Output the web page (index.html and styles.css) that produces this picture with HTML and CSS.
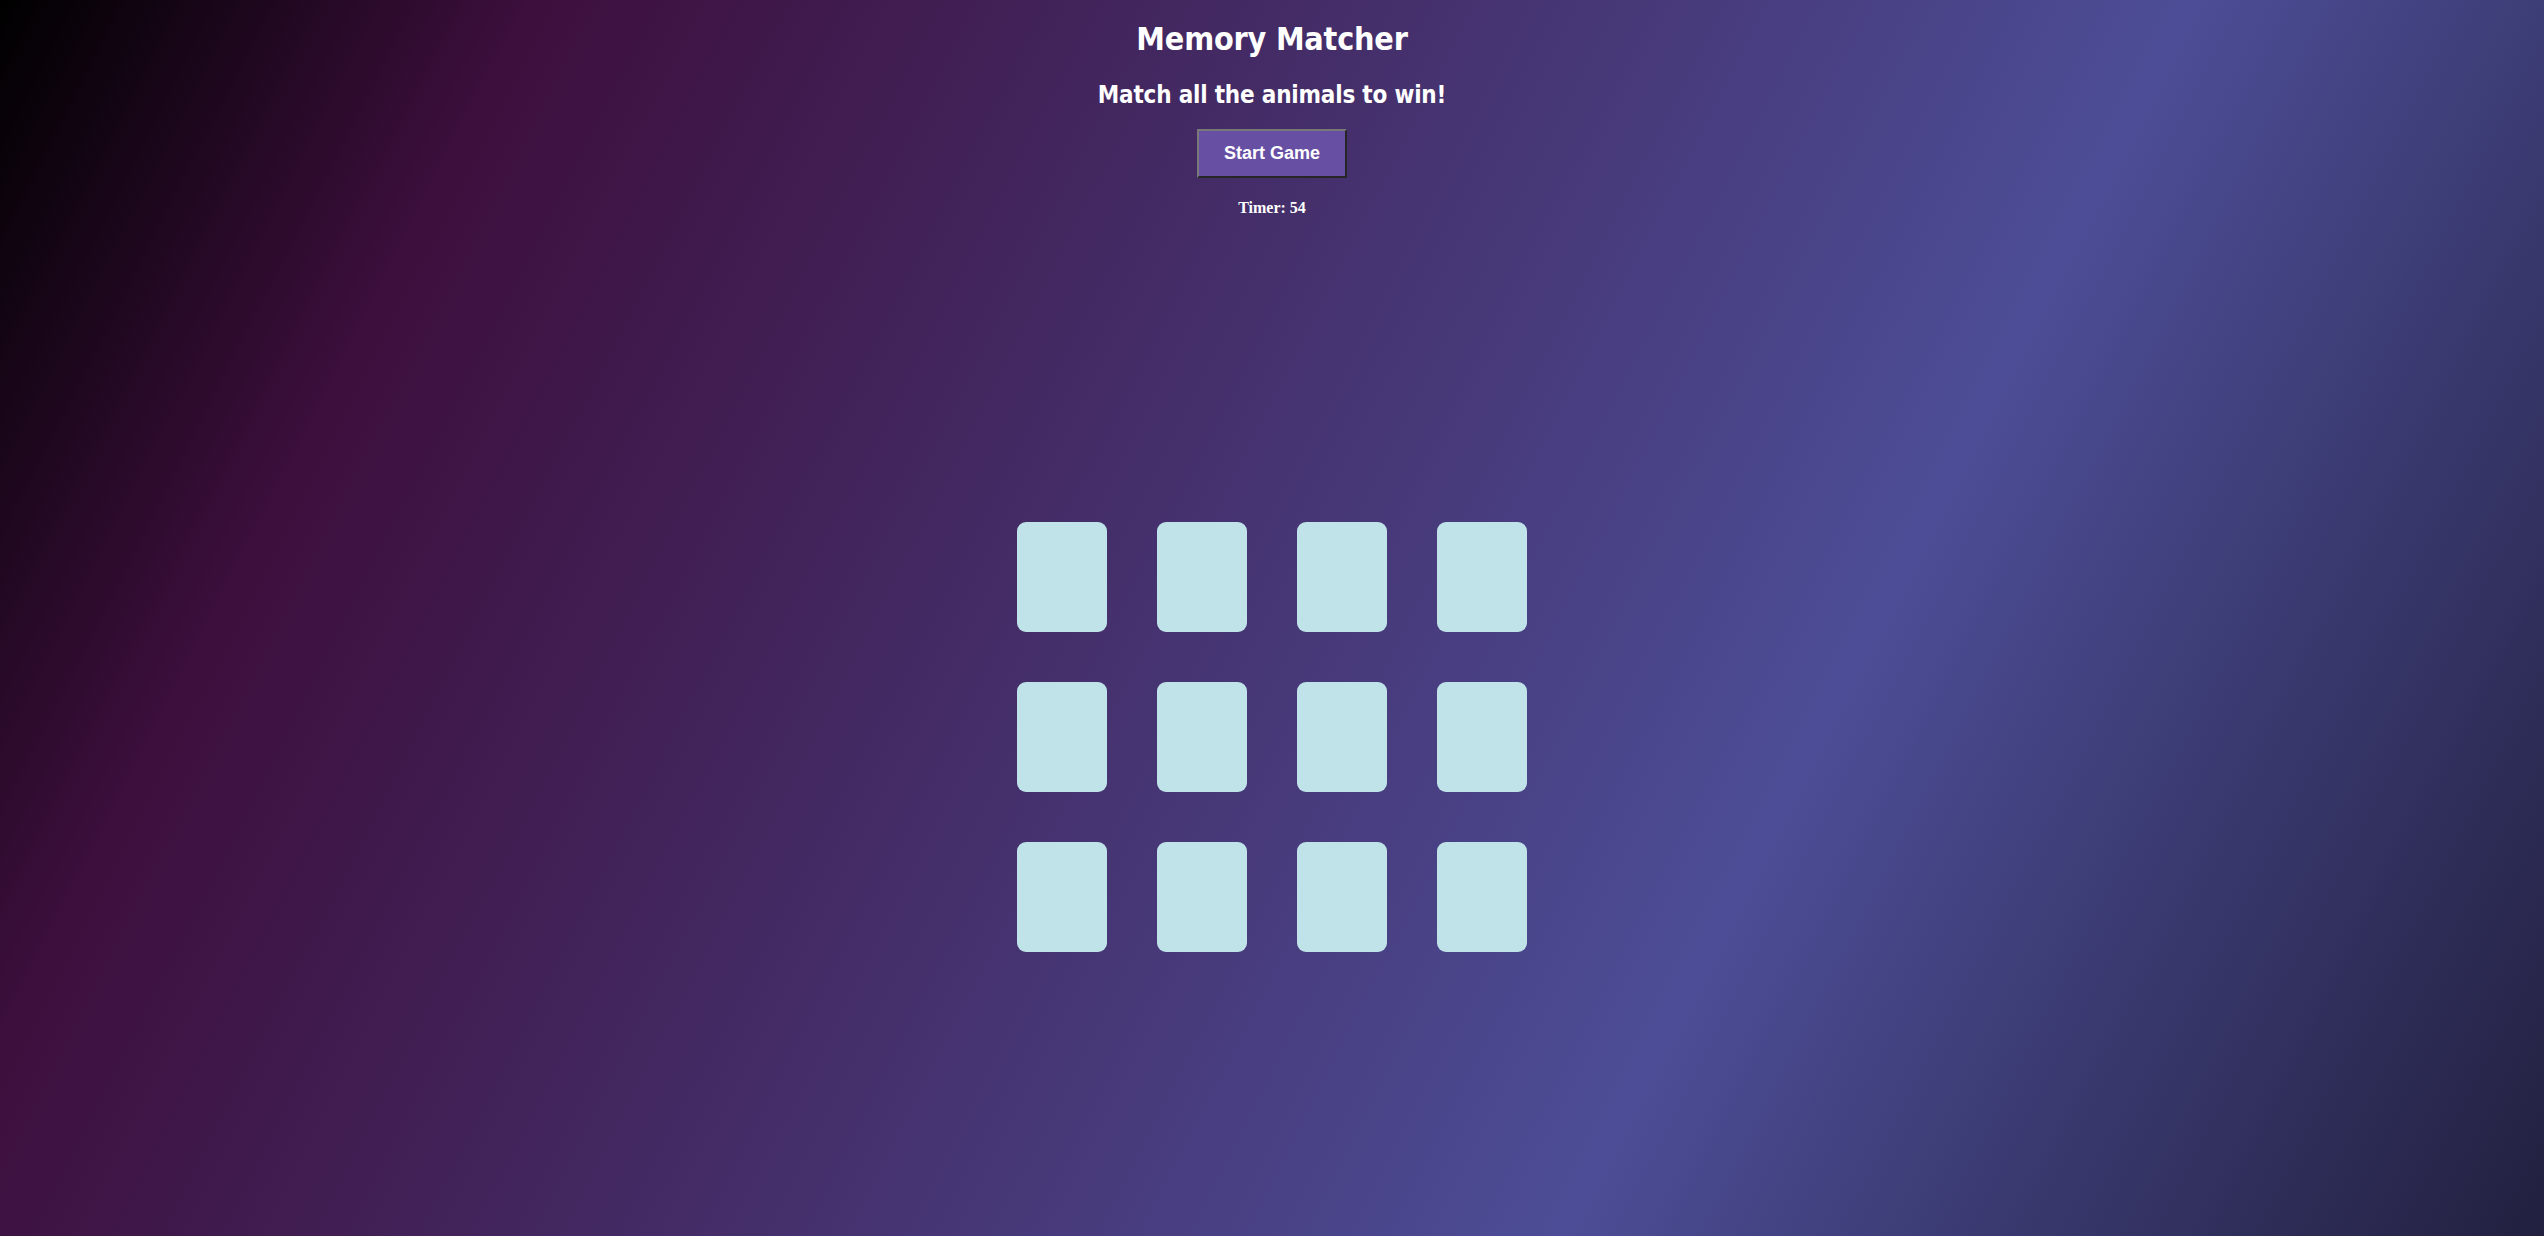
FILE: index.html
```html
<!DOCTYPE html>
<html lang="en">
<head>
<meta charset="utf-8">
<title>Memory Matcher</title>
<link rel="stylesheet" href="styles.css">
</head>
<body>
<main class="page">
  <h1 class="title">Memory Matcher</h1>
  <h2 class="subtitle">Match all the animals to win!</h2>
  <button class="start-btn" type="button">Start Game</button>
  <p class="timer">Timer: 54</p>
  <section class="board">
    <div class="card"></div>
    <div class="card"></div>
    <div class="card"></div>
    <div class="card"></div>
    <div class="card"></div>
    <div class="card"></div>
    <div class="card"></div>
    <div class="card"></div>
    <div class="card"></div>
    <div class="card"></div>
    <div class="card"></div>
    <div class="card"></div>
  </section>
</main>
</body>
</html>
```

FILE: styles.css
```css
html, body {
  margin: 0;
  padding: 0;
  height: 100%;
}

body {
  background: linear-gradient(117deg, #000000 0%, #3d0f3d 17%, #4c4d96 69%, #22203f 100%);
  color: #ffffff;
  font-family: "DejaVu Sans Condensed", "DejaVu Sans", sans-serif;
}

.page {
  display: flex;
  flex-direction: column;
  align-items: center;
}

.title {
  margin: 21px 0 0;
  font-size: 32px;
  line-height: 37px;
  font-weight: bold;
  letter-spacing: -0.2px;
}

.subtitle {
  margin: 23px 0 0;
  font-size: 24px;
  line-height: 28px;
  font-weight: bold;
  letter-spacing: -0.2px;
}

.start-btn {
  margin: 20px 0 0;
  padding: 12px 25px;
  font-family: "Liberation Sans", Arial, sans-serif;
  font-size: 18px;
  line-height: 21px;
  font-weight: bold;
  color: #ffffff;
  background: #6750a4;
  border-width: 2px;
  border-style: solid;
  border-color: #787878 #262626 #262626 #787878;
  border-radius: 0;
  cursor: pointer;
}

.timer {
  margin: 21px 0 0;
  font-family: "Liberation Serif", "Times New Roman", serif;
  font-size: 16px;
  line-height: 18px;
  font-weight: bold;
}

.board {
  margin-top: 305px;
  display: grid;
  grid-template-columns: repeat(4, 90px);
  grid-auto-rows: 110px;
  gap: 50px;
}

.card {
  background: #bfe3e8;
  border-radius: 9px;
}
```
